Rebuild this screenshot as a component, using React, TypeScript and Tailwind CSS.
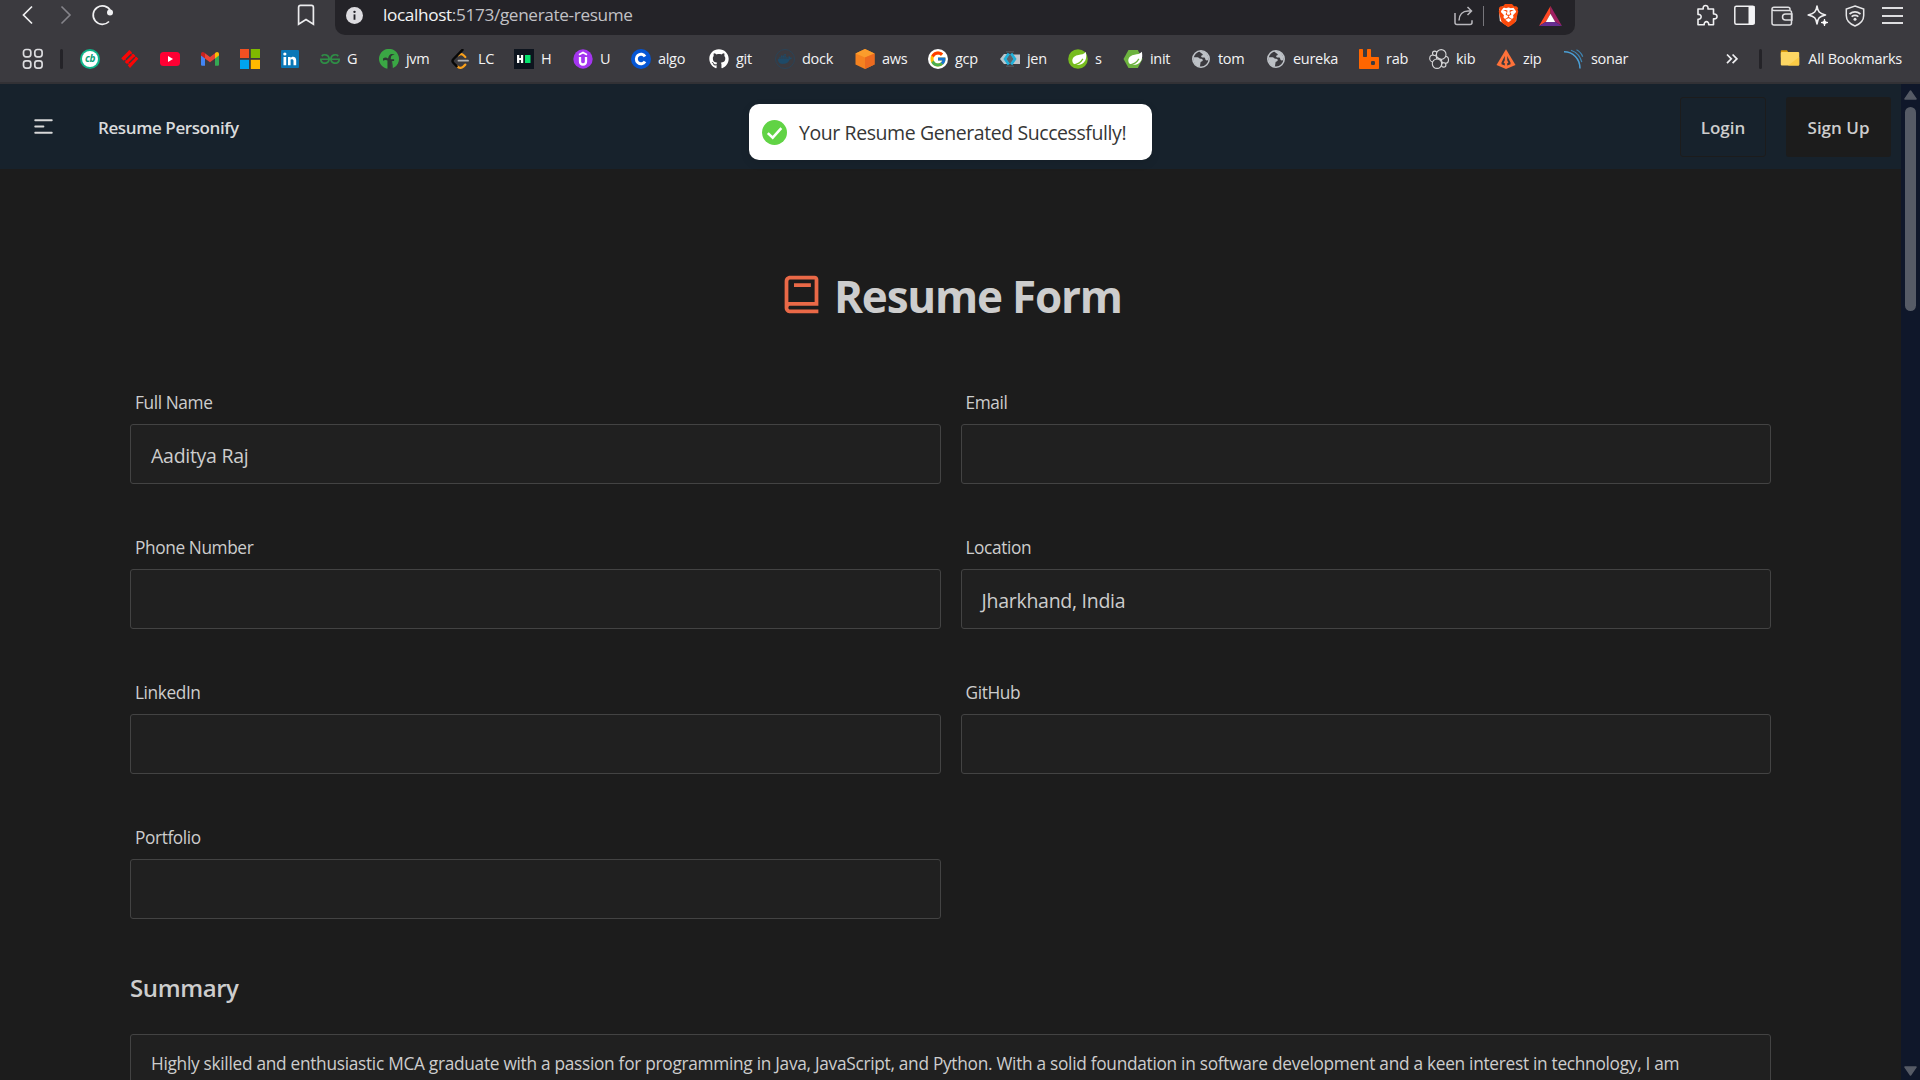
import type { ReactNode } from 'react';
import { SiBrave, SiGeeksforgeeks, SiDocker, SiRabbitmq } from 'react-icons/si';
import { FaGithub } from 'react-icons/fa';
import { FcGoogle } from 'react-icons/fc';
import { BiBook } from 'react-icons/bi';

type SvgProps = { children: ReactNode; box?: string; className?: string };

function Glyph({ children, box = '0 0 20 20', className = 'size-5' }: SvgProps) {
  return (
    <svg viewBox={box} className={`shrink-0 ${className}`} fill="none">
      {children}
    </svg>
  );
}

const Globe = () => (
  <Glyph>
    <circle cx="10" cy="10" r="8.2" fill="#3b3a3f" stroke="#bdc1c6" strokeWidth="1.6" />
    <path d="M2.5 8.2h4.2c1 0 1.2 1 2 1.4.9.5 2.300 0 2.900.8.6.9-.1 1.800-1 2-1.200.3-1.100 1.200-1.200 2.200-.1 1-.5 2-.4 3.200C5 17.400 2 13.800 2.500 8.200Z" fill="#bdc1c6" />
    <path d="M8.500 2.200c3-.5 6.400 1 8 4 .8 1.400 1 2.800.9 4.600-.9.900-2.300.9-2.900-.1-.5-.9-.2-2-1.300-2.200-1-.2-1.600.3-2.500-.2-.9-.6-.6-1.600.2-2 .8-.3 1.200-.8.600-1.400-.7-.7-2.300-.8-3-2.700Z" fill="#bdc1c6" />
  </Glyph>
);

const leaf = 'M16.800 3.400c-1.600 2.300-4.600 2.500-7.200 2.900C6.200 6.800 3.400 8.600 3.300 12c0 2.300 1.600 4.200 4 4.400 3.400.3 7.200-.8 9-4.400 1.200-2.500 1.200-5.700.5-8.600Z';
const vein = 'M4.800 16.200c4.200-.6 8-2.600 10.100-6.300';

const bookmarks: { width: string; label?: string; icon: ReactNode }[] = [
  {
    width: 'w-10',
    icon: (
      <Glyph>
        <circle cx="10" cy="10" r="10" fill="#10b58a" />
        <circle cx="10" cy="10" r="8" fill="#fff" />
        <text x="10" y="13.300" textAnchor="middle" fontSize="10" fontWeight="700" fontStyle="italic" fill="#0c9f79" fontFamily="Open Sans, sans-serif">cb</text>
      </Glyph>
    ),
  },
  {
    width: 'w-10',
    icon: (
      <Glyph>
        <path d="M9.500 1 12 3.500 3.700 11.800 1.200 9.300ZM13.300 4.800l2 2L7 15.100l-2.200-2.200ZM16.300 7.800l2 2L10 19l-2.200-2.700Z" fill="#fb0505" />
        <path d="m8.500 2.200 8.800 7.600M3 8l8 9" stroke="#fb0505" strokeWidth=".9" />
      </Glyph>
    ),
  },
  {
    width: 'w-10',
    icon: (
      <Glyph>
        <rect y="3" width="20" height="14" rx="3.500" fill="#ff0033" />
        <path d="m8 7 5 3-5 3Z" fill="#fff" />
      </Glyph>
    ),
  },
  {
    width: 'w-10',
    icon: (
      <Glyph>
        <path d="M1 6v9.500c0 .8.600 1.300 1.300 1.300H5V8.500Z" fill="#4285f4" />
        <path d="M15 8.500v8.300h2.700c.8 0 1.300-.6 1.300-1.300V6Z" fill="#34a853" />
        <path d="M15 4.300v5.200l4-3V5c0-1.900-2-2.600-3.300-1.500Z" fill="#fbbc04" />
        <path d="M5 9.500V4.300l5 3.800 5-3.800v5.200l-5 3.800Z" fill="#ea4335" />
        <path d="M1 5v1.500l4 3V4.300l-.8-.7C2.900 2.500 1 3.200 1 5Z" fill="#c5221f" />
      </Glyph>
    ),
  },
  {
    width: 'w-10',
    icon: (
      <Glyph>
        <path d="M0 0h9v9H0Z" fill="#f25022" />
        <path d="M10.800 0H20v9h-9.200Z" fill="#7fba00" />
        <path d="M0 10.800h9V20H0Z" fill="#00a4ef" />
        <path d="M10.800 10.800H20V20h-9.200Z" fill="#ffb900" />
      </Glyph>
    ),
  },
  {
    width: 'w-10',
    icon: (
      <Glyph>
        <rect x="1" y="1" width="18" height="18" rx="1" fill="#0a77b7" />
        <path d="M3.500 8h2.700v8.300H3.500ZM8 8h2.600v8.300H8ZM10.500 11.500c0-1.800 3-1.900 3 .3v4.500h2.700v-5c0-4.200-4.500-4.400-5.700-2.100Z" fill="#fff" />
        <circle cx="4.850" cy="5" r="1.600" fill="#fff" />
      </Glyph>
    ),
  },
  { width: 'w-[59px]', label: 'G', icon: <SiGeeksforgeeks className="size-5 shrink-0 text-[#2f8d46]" /> },
  {
    width: 'w-[72px]',
    label: 'jvm',
    icon: (
      <Glyph>
        <path d="M5.500 18.800A10 10 0 1 1 14.500 18.800L13 11H8.600v8.500l-1.400.1Z" fill="#3aa744" />
        <path d="M8.800 19.500c.2-5.500-.8-10 1.600-13.200 1.300-1.700 3.700-1.700 5.300-.3-1.800-.3-3.300.3-3.700 1.900l-.3 2.300h3.400v1.700h-3.400l-.3 7.600M4 9.500c1.800-1.500 3.500-1.500 5 0v2.200c-1.600-1-3.300-1-5 0Z" fill="#2e3a33" />
        <path d="M13.500 12.500h5.800c-.6 2.700-2.500 5.300-5.500 6.400Z" fill="#3aa744" />
      </Glyph>
    ),
  },
  {
    width: 'w-[63px]',
    label: 'LC',
    icon: (
      <Glyph>
        <path d="M7.500 6.300c1.700-1.500 3.400-1.500 5 0l1.800 1.700M6.300 17.200c1.800 1.900 4.200 2 6 .4l2-2" stroke="#f9a01b" strokeWidth="2.200" strokeLinecap="round" />
        <path d="M11.500.8 2.300 10.200c-1 1.100-1 2.500 0 3.600l3.300 3.400" stroke="#080808" strokeWidth="2.400" strokeLinecap="round" />
        <path d="M7.500 11.700h9.500" stroke="#b3b3b3" strokeWidth="1.800" strokeLinecap="round" />
      </Glyph>
    ),
  },
  {
    width: 'w-[59px]',
    label: 'H',
    icon: (
      <Glyph>
        <path d="M0 0h20v20H0Z" fill="#0d141e" />
        <path d="M3 6h2.300v3h1.600V6h2.300v8H6.900v-3H5.300v3H3Z" fill="#fff" />
        <path d="M11 6h5.500v8H11Z" fill="#05e46e" />
      </Glyph>
    ),
  },
  {
    width: 'w-[58px]',
    label: 'U',
    icon: (
      <Glyph>
        <circle cx="10" cy="10" r="9.700" fill="#a435f0" />
        <path d="M7 8v4.500c0 4 6 4 6 0V8" stroke="#fff" strokeWidth="2.300" />
        <path d="m6 5.800 4-2.300 4 2.300" stroke="#fff" strokeWidth="1.800" />
      </Glyph>
    ),
  },
  {
    width: 'w-[78px]',
    label: 'algo',
    icon: (
      <Glyph>
        <circle cx="10" cy="10" r="10" fill="#0556d5" />
        <path d="M14 7.500A4.700 4.700 0 1 0 14 12.500" stroke="#fff" strokeWidth="3" />
      </Glyph>
    ),
  },
  { width: 'w-[66px]', label: 'git', icon: <FaGithub className="size-5 shrink-0 text-white" /> },
  {
    width: 'w-20',
    label: 'dock',
    icon: (
      <span className="flex size-5 shrink-0 items-center justify-center rounded-full border border-[#2a4357] text-[#1e4a68]">
        <SiDocker className="size-3.5" />
      </span>
    ),
  },
  {
    width: 'w-[73px]',
    label: 'aws',
    icon: (
      <Glyph>
        <path d="m10 0 9.500 4.500v11L10 20 .5 15.500v-11Z" fill="#f58220" />
        <path d="m10 0 9.500 4.500L10 8.500.5 4.500Z" fill="#fb9d2c" />
        <path d="M10 8.500 19.500 4.500v11L10 20Z" fill="#ec6a20" />
      </Glyph>
    ),
  },
  {
    width: 'w-[72px]',
    label: 'gcp',
    icon: (
      <span className="flex size-5 shrink-0 items-center justify-center rounded-full bg-white">
        <FcGoogle className="size-[18px]" />
      </span>
    ),
  },
  {
    width: 'w-[68px]',
    label: 'jen',
    icon: (
      <Glyph>
        <path d="M11 5.500h9v9.500h-9Z" fill="#c3c6ca" />
        <path d="M4 5h6v10H4L0 10Z" fill="#b9c6cc" />
        <path d="M6 2.800h8M6 17.200h8" stroke="#505156" strokeWidth="1.500" />
        <path d="M10 4.500 6 10l4 5.500 4-5.500Z" fill="#5d646a" />
        <path d="M8.800 4.500 5 10l3.800 5.500M11.200 4.500 15 10l-3.800 5.500" stroke="#1fb1dc" strokeWidth="2.600" />
      </Glyph>
    ),
  },
  {
    width: 'w-[55px]',
    label: 's',
    icon: (
      <Glyph>
        <circle cx="10" cy="10" r="9.800" fill="#77bc1f" />
        <path d={leaf} transform="translate(1 -.4)" fill="#fff" />
        <path d={vein} stroke="#77bc1f" strokeWidth="1.200" />
      </Glyph>
    ),
  },
  {
    width: 'w-[68px]',
    label: 'init',
    icon: (
      <Glyph>
        <path d="M5.500 1h9.300L19.500 10l-4.700 9H5.500L.5 10Z" fill="#6db33f" />
        <path d={leaf} transform="translate(2 -.6)" fill="#fff" />
        <path d={vein} transform="translate(1)" stroke="#6db33f" strokeWidth="1.200" />
      </Glyph>
    ),
  },
  { width: 'w-[75px]', label: 'tom', icon: <Globe /> },
  { width: 'w-[93px]', label: 'eureka', icon: <Globe /> },
  { width: 'w-[70px]', label: 'rab', icon: <SiRabbitmq className="size-5 shrink-0 text-[#ff6600]" /> },
  {
    width: 'w-[67px]',
    label: 'kib',
    icon: (
      <Glyph>
        <g stroke="#d6d6d8" strokeWidth="1.100" fill="#3b3a3f">
          <circle cx="4.200" cy="9.500" r="3.500" />
          <circle cx="16" cy="10.800" r="3.500" />
          <circle cx="5.700" cy="4.300" r="2.200" />
          <circle cx="14.700" cy="15.900" r="2.200" />
          <circle cx="12.200" cy="5.400" r="4.800" />
          <circle cx="8" cy="14.700" r="4.700" />
          <path d="m8 8.500 5 2.400" />
        </g>
      </Glyph>
    ),
  },
  {
    width: 'w-[68px]',
    label: 'zip',
    icon: (
      <Glyph>
        <path d="M10 .3 19.500 16 10 20 .5 16Z" fill="#fe7139" />
        <path d="M8.800 7 5.500 13.500v1.700l3.300 1.400v-2.300l-1.200-.6 1.200-2.500ZM11.200 7l3.300 6.500v1.700l-3.300 1.400v-2.300l1.200-.6-1.200-2.500Z" fill="#3b3a3f" />
      </Glyph>
    ),
  },
  {
    width: 'w-20',
    label: 'sonar',
    icon: (
      <Glyph>
        <path d="M0 2.700c9 0 16 7 16 16.800" stroke="#4b9fd5" strokeWidth="1.500" />
        <path d="M7 1.200c5.500 2 9.500 6.400 10.800 12M12.500.8c3 1.600 5.200 4 6.200 7" stroke="#3f86b3" strokeWidth="1.200" />
      </Glyph>
    ),
  },
];

function Chrome() {
  return (
    <header className="flex h-[84px] flex-col border-b-2 border-[#323135] bg-[#3b3a3f]">
      <div className="flex h-[35px] shrink-0">
        <div className="flex h-[30px] w-[335px] shrink-0 items-center pl-[21px]">
          <Glyph className="h-5 w-3.5" box="0 0 14 20">
            <path d="M11 1.500 2.500 10l8.500 8.500" stroke="#f0f0f2" strokeWidth="1.700" />
          </Glyph>
          <Glyph className="ml-[25px] h-5 w-3.5" box="0 0 14 20">
            <path d="m1.500 1.500 8.500 8.500-8.500 8.500" stroke="#85848a" strokeWidth="1.600" />
          </Glyph>
          <Glyph className="ml-[17px] h-[22px] w-[24px]" box="0 0 24 22">
            <path d="M18 17.500A9.200 9.200 0 1 1 19.500 6.800" stroke="#f0f0f2" strokeWidth="1.700" />
            <circle cx="19" cy="8.500" r="3" fill="#f0f0f2" />
          </Glyph>
          <Glyph className="ml-[182px] h-[22px] w-[18px]" box="0 0 18 22">
            <path d="M1.600 3.500C1.600 2 2.300 1.300 3.500 1.300h11c1.200 0 1.900.7 1.900 2.200V20.200L9 15.500l-7.400 4.700Z" stroke="#ececee" strokeWidth="1.700" />
          </Glyph>
        </div>
        <div className="flex w-[1240px] shrink-0 items-center rounded-b-[10px] bg-[#242328] pb-1.5 pl-[11px]">
          <Glyph className="mt-0.5 h-[17px] w-[17px]">
            <circle cx="10" cy="10" r="10" fill="#dddce0" />
            <circle cx="10" cy="5.700" r="1.400" fill="#242328" />
            <path d="M10 8.700v6.300" stroke="#242328" strokeWidth="2.200" />
          </Glyph>
          <div className="ml-5 flex-1 text-[17.2px] leading-[30px] tracking-[-0.35px] text-[#c2c1c5]">
            <span className="text-[#f3f3f5]">localhost</span>:5173/generate-resume
          </div>
          <div className="flex items-center pr-[13px] pt-0.5">
            <Glyph>
              <path d="M1 7v9.500c0 1.300.7 2 2 2h13c1.300 0 2-.7 2-2v-2.200M5 14.500c.2-5.800 3.700-9.500 9-9.500h3M13.500 1l4 4-4 4" stroke="#b9b8bd" strokeWidth="1.500" />
            </Glyph>
            <div className="ml-[9px] h-5 w-px bg-[#77767b]" />
            <span className="relative ml-[14px] flex h-6 w-5 items-center justify-center">
              <svg viewBox="0 0 20 24" className="absolute size-full"><path d="M5 2h10l4 3.500-.8 11.500L10 22.500 1.800 17 1 5.500Z" fill="#fff" /></svg>
              <SiBrave className="relative size-[23px] shrink-0 text-[#fb4a0b]" />
            </span>
            <Glyph className="ml-[21px] h-5 w-[23px]" box="0 0 23 20">
              <path d="M11.500 0 0 20l7-4.300 4.500-7.900Z" fill="#ff4724" />
              <path d="M11.500 0 23 20l-7-4.300-4.500-7.900Z" fill="#9e1f63" />
              <path d="M0 20h23l-7-4.300H7Z" fill="#662d91" />
              <path d="m11.500 7.700 4.700 8.200H6.800Z" fill="#fff" />
            </Glyph>
          </div>
        </div>
        <div className="flex h-[31px] flex-1 items-center justify-end gap-4 pr-[17px]">
          <Glyph className="-mr-px size-[23px]" box="0 0 23 23">
            <path d="M2 5h5.200c-.8-4.700 5.600-4.700 4.800 0h5.500v5c4.700-.8 4.700 5.600 0 4.800v6h-4.800c.5-4.200-5-4.200-4.500 0H2v-5.600c4.200.6 4.200-5.300 0-4.800Z" stroke="#f0f0f2" strokeWidth="1.600" strokeLinejoin="round" />
          </Glyph>
          <Glyph className="size-[21px]" box="0 0 21 21">
            <rect x=".8" y="1.300" width="19.400" height="18" rx="1.500" stroke="#f0f0f2" strokeWidth="1.500" />
            <path d="M14.500 1h6v18h-6Z" fill="#f4f4f6" />
          </Glyph>
          <Glyph className="h-5 w-[22px]" box="0 0 22 20">
            <path d="M1 3v14c0 1.300.8 2 2 2h15.500c1.200 0 2-.7 2-2V6.300c0-1.300-.8-1.800-2-1.800H3C1.800 4.500 1 4 1 3S1.800 1.200 3 1.200h14c1.200 0 2 .6 2 1.800v1.500M21 8h-6.500c-1.800 0-3 1.300-3 3s1.200 3 3 3H21Z" stroke="#dfdfe2" strokeWidth="1.500" />
          </Glyph>
          <Glyph className="-ml-0.5 size-[22px]" box="0 0 22 22">
            <path d="M10 1c.8 5.700 2.300 7.200 8.500 9-6.200 1.400-7.700 3-8.500 9-.8-6-2.500-7.600-8.800-9C7.500 8.200 9.200 6.700 10 1Z" stroke="#f0f0f2" strokeWidth="1.600" strokeLinejoin="round" />
            <path d="M17.500 14c.3 2.500 1 3 3.500 3.500-2.500.5-3.200 1.200-3.500 3.500-.3-2.300-1-3-3.500-3.500 2.500-.5 3.200-1 3.500-3.500Z" fill="#fff" stroke="#fff" />
          </Glyph>
          <Glyph className="h-[22px] w-[20px]" box="0 0 20 22">
            <path d="m10 1 8.700 3v6.500c0 4.700-3.300 8.400-8.700 10.500-5.400-2.100-8.700-5.800-8.700-10.500V4Z" stroke="#e6e6e8" strokeWidth="1.500" />
            <path d="M4.500 9c3.500-2.700 7.500-2.700 11 0M6.600 11.600c2.200-1.500 4.600-1.500 6.800 0" stroke="#e6e6e8" strokeWidth="1.700" />
            <circle cx="10" cy="14.200" r="1.500" fill="#e6e6e8" />
          </Glyph>
          <div className="ml-px flex h-[17px] w-[21px] flex-col justify-between">
            <i className="h-0.5 bg-[#dedee0]" />
            <i className="h-0.5 bg-[#dedee0]" />
            <i className="h-0.5 bg-[#dedee0]" />
          </div>
        </div>
      </div>
      <div className="flex h-12 items-center pl-[22px] text-[14.5px] tracking-[-0.3px] text-[#f3f3f5]">
        <Glyph className="h-[22px] w-[22px]" box="0 0 22 22">
          <g stroke="#dcdcdf" strokeWidth="1.700">
            <rect x="1.500" y="1.500" width="7.300" height="7.300" rx="2.500" />
            <rect x="12.800" y="1.500" width="7.300" height="7.300" rx="2.500" />
            <rect x="1.500" y="12.800" width="7.300" height="7.300" rx="2.500" />
            <rect x="12.800" y="12.800" width="7.300" height="7.300" rx="2.500" />
          </g>
        </Glyph>
        <div className="ml-4 mr-[17px] h-5 w-[3px] rounded bg-[#242328]" />
        {bookmarks.map((b, i) => (
          <div key={i} className={`flex shrink-0 items-center gap-[7px] ${b.width}`}>
            {b.icon}
            {b.label && <span>{b.label}</span>}
          </div>
        ))}
        <div className="flex flex-1 items-center justify-end pr-[18px]">
          <Glyph className="h-3 w-3" box="0 0 12 12">
            <path d="m1 1.500 4.300 4.300L1 10.100M6.600 1.500l4.300 4.300-4.300 4.300" stroke="#f0f0f2" strokeWidth="1.700" />
          </Glyph>
          <div className="ml-[21px] mr-[18px] h-5 w-[3px] rounded bg-[#242328]" />
          <Glyph>
            <path d="M.8 2.500c0-.8.5-1.300 1.200-1.300h5l1.500 2.300H18v5H.8Z" fill="#d99a0b" />
            <rect x=".8" y="3" width="18.400" height="13.500" rx="1" fill="#fdd663" />
            <path d="M19.200 8v7.500c0 .7-.3 1-1 1H8Z" fill="#fbcb45" />
          </Glyph>
          <span className="ml-[8px] tracking-[-0.23px]">All Bookmarks</span>
        </div>
      </div>
    </header>
  );
}

function Toast() {
  return (
    <div className="absolute left-[749px] top-5 flex h-14 w-[403px] items-center rounded-[10px] bg-white pl-[13px] shadow-[0_3px_10px_rgba(0,0,0,0.1)]">
      <Glyph className="size-[25px]" box="0 0 25 25">
        <circle cx="12.500" cy="12.500" r="12.500" fill="#61d345" />
        <path d="m6.700 14 4 3.700 7.800-8.700" stroke="#fff" strokeWidth="2.500" strokeLinecap="square" />
      </Glyph>
      <span className="ml-3 mt-0.5 whitespace-nowrap text-[19.5px] font-normal tracking-[-0.42px] text-[#363636]">
        Your Resume Generated Successfully!
      </span>
    </div>
  );
}

function Navbar() {
  return (
    <nav className="relative flex h-[85px] items-center bg-[#17222c] pl-[31px] pr-[10px] text-[17px] font-semibold">
      <Glyph className="size-[25px]" box="0 0 24 24">
        <path d="M4 6h16M4 12h8m-8 6h16" stroke="#d8d8d8" strokeWidth="1.700" strokeLinecap="round" />
      </Glyph>
      <span className="ml-[42px] mt-0.5 flex-1 tracking-[-0.4px] text-[#dadbdc]">Resume Personify</span>
      <Toast />
      <button className="h-[60px] w-[86px] rounded-[3px] border border-[#1c1c1c] pt-0.5 tracking-[-0.02px] text-[#cdcdcd]">Login</button>
      <button className="ml-5 h-[60px] w-[105px] rounded-[3px] bg-[#1c1c1c] pt-0.5 text-[#cdcdcd]">Sign Up</button>
    </nav>
  );
}

const fields = [
  { label: 'Full Name', value: 'Aaditya Raj' },
  { label: 'Email', value: '' },
  { label: 'Phone Number', value: '' },
  { label: 'Location', value: 'Jharkhand, India' },
  { label: 'LinkedIn', value: '' },
  { label: 'GitHub', value: '' },
  { label: 'Portfolio', value: '' },
];

function ResumeForm() {
  return (
    <main className="px-[130px]">
      <h1 className="mt-[97px] flex h-[60px] items-center pl-[649px] text-[44px] font-bold leading-[60px] tracking-[-1.2px]">
        <BiBook className="-mt-[3px] size-[45px] shrink-0 text-[#ea6947]" />
        <span className="ml-[10px] whitespace-nowrap">Resume Form</span>
      </h1>
      <div className="mt-[58px] grid grid-cols-2 gap-x-5">
        {fields.map((f) => (
          <label key={f.label} className="flex h-[145px] flex-col">
            <span className="h-10 pl-[5px] text-[17.3px] leading-[37px] tracking-[-0.4px]">{f.label}</span>
            <span className="flex h-[60px] items-center rounded-[3px] border border-[#434343] bg-[#202020] pl-5 pt-1 text-[19.5px] tracking-[-0.27px]">
              {f.value}
            </span>
          </label>
        ))}
      </div>
      <h2 className="mt-[6px] text-2xl font-semibold leading-9 tracking-[-0.4px]">Summary</h2>
      <div className="mt-[28px] h-[150px] whitespace-nowrap rounded-[3px] border border-[#434343] bg-[#202020] px-5 pt-[16px] text-[17.3px] leading-[25px] tracking-[-0.29px]">
        Highly skilled and enthusiastic MCA graduate with a passion for programming in Java, JavaScript, and Python. With a solid foundation in software development and a keen interest in technology, I am
      </div>
    </main>
  );
}

function Scrollbar() {
  return (
    <aside className="flex w-[19px] shrink-0 flex-col items-center bg-[#0f172a] pb-1 pt-1.5">
      <Glyph className="h-2.5 w-[13px]" box="0 0 13 10">
        <path d="M6.500 1 12 9H1Z" fill="#565b66" stroke="#565b66" strokeWidth="1.500" strokeLinejoin="round" />
      </Glyph>
      <div className="mb-auto mt-[7px] h-[204px] w-[11px] rounded-full bg-[#565b66]" />
      <Glyph className="h-2.5 w-[13px]" box="0 0 13 10">
        <path d="M6.500 9 12 1H1Z" fill="#565b66" stroke="#565b66" strokeWidth="1.500" strokeLinejoin="round" />
      </Glyph>
    </aside>
  );
}

export default function App() {
  return (
    <div className="flex h-[1080px] w-[1920px] flex-col overflow-hidden bg-[#1c1c1c] font-['Open_Sans','Noto_Sans',sans-serif] text-[#cdcdcd]">
      <Chrome />
      <div className="flex h-[996px]">
        <div className="w-[1901px] shrink-0 overflow-hidden">
          <Navbar />
          <ResumeForm />
        </div>
        <Scrollbar />
      </div>
    </div>
  );
}
